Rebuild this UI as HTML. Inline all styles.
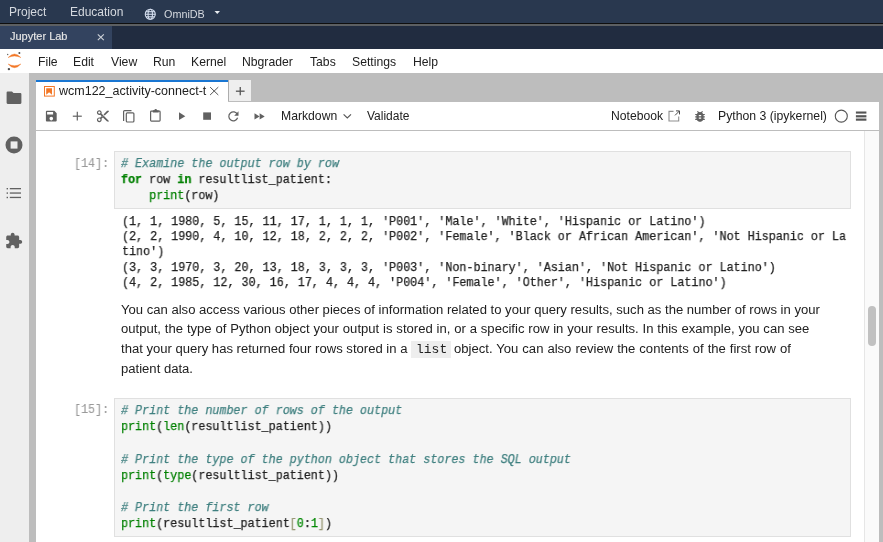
<!DOCTYPE html>
<html><head><meta charset="utf-8">
<style>
*{margin:0;padding:0;box-sizing:border-box}
html,body{width:883px;height:542px;overflow:hidden;background:#bdbdbd;font-family:"Liberation Sans",sans-serif}
.a{position:absolute}
.t{position:absolute;white-space:pre;line-height:1;will-change:transform}
svg{position:absolute;overflow:visible}
.mono{font-family:"Liberation Mono",monospace}
.cd{position:absolute;font-family:"Liberation Mono",monospace;font-size:12.8px;white-space:pre;color:#212121;transform-origin:0 0;transform:scaleX(0.9154);will-change:transform;-webkit-text-stroke:0.25px currentColor}
.c{color:#408080;font-style:italic}
.k{color:#008000;font-weight:bold}
.b{color:#008000}
.n{color:#008800}
.br{color:#999977}
</style></head><body>
<!-- top bar -->
<div class="a" style="left:0;top:0;width:883px;height:23px;background:#29384f"></div>
<div class="a" style="left:0;top:23px;width:883px;height:1px;background:#0e0e0e"></div>
<div class="a" style="left:0;top:24px;width:883px;height:2px;background:#5c5f62"></div>
<div class="a" style="left:0;top:26px;width:883px;height:23px;background:#212c40"></div>
<div class="a" style="left:0;top:26px;width:112px;height:23px;background:#33435f"></div>
<div class="t" style="left:9px;top:6px;font-size:12px;color:#d5d9df">Project</div>
<div class="t" style="left:70px;top:6px;font-size:12px;color:#d5d9df">Education</div>
<div class="t" style="left:163.5px;top:8.5px;font-size:10.8px;color:#d5d9df">OmniDB</div>
<div class="t" style="left:10px;top:31px;font-size:11px;color:#e6e6e6;-webkit-text-stroke:0.15px #e6e6e6">Jupyter Lab</div>

<!-- menu bar -->
<div class="a" style="left:0;top:49px;width:883px;height:24px;background:#fff"></div>
<div class="t" style="left:38.0px;top:56px;font-size:12.2px;color:#212121">File</div>
<div class="t" style="left:73.1px;top:56px;font-size:12.2px;color:#212121">Edit</div>
<div class="t" style="left:110.5px;top:56px;font-size:12.2px;color:#212121">View</div>
<div class="t" style="left:152.8px;top:56px;font-size:12.2px;color:#212121">Run</div>
<div class="t" style="left:190.7px;top:56px;font-size:12.2px;color:#212121">Kernel</div>
<div class="t" style="left:241.9px;top:56px;font-size:12.2px;color:#212121">Nbgrader</div>
<div class="t" style="left:309.6px;top:56px;font-size:12.2px;color:#212121">Tabs</div>
<div class="t" style="left:351.5px;top:56px;font-size:12.2px;color:#212121">Settings</div>
<div class="t" style="left:413.0px;top:56px;font-size:12.2px;color:#212121">Help</div>

<!-- left sidebar -->
<div class="a" style="left:0;top:73px;width:29px;height:469px;background:#eeeeee"></div>

<!-- tabs -->
<div class="a" style="left:36px;top:80px;width:192px;height:22px;background:#fff;border-top:2px solid #1976d2"></div>
<div class="a" style="left:228px;top:80px;width:23px;height:21px;background:#eeeeee;border-left:1px solid #adadad"></div>
<div class="t" style="left:59px;top:85px;width:148px;overflow:hidden;font-size:12.5px;color:#212121">wcm122_activity-connect-t</div>

<!-- notebook panel -->
<div class="a" style="left:36px;top:102px;width:843px;height:440px;background:#fff"></div>
<div class="a" style="left:36px;top:130px;width:843px;height:1px;background:#bdbdbd"></div>
<div class="t" style="left:281px;top:110px;font-size:12.2px;color:#212121">Markdown</div>
<div class="t" style="left:367px;top:110px;font-size:12px;color:#212121">Validate</div>
<div class="t" style="left:611px;top:110px;font-size:12.15px;color:#212121">Notebook</div>
<div class="t" style="left:718px;top:110px;font-size:12.25px;color:#212121">Python 3 (ipykernel)</div>

<!-- scrollbar -->
<div class="a" style="left:864px;top:131px;width:15px;height:411px;background:#fafafa;border-left:1px solid #e6e6e6"></div>
<div class="a" style="left:868px;top:306px;width:8px;height:40px;background:#c1c1c1;border-radius:4px"></div>

<!-- cell 14 -->
<div class="cd" style="left:73.5px;top:158px;line-height:1;color:#9a9a9a;-webkit-text-stroke:0.1px currentColor">[14]:</div>
<div class="a" style="left:114px;top:151px;width:737px;height:58px;background:#f5f5f5;border:1px solid #e0e0e0"></div>
<div class="cd" style="left:121px;top:156.2px;line-height:16.17px"><span class="c"># Examine the output row by row</span>
<span class="k">for</span> row <span class="k">in</span> resultlist_patient:
    <span class="b">print</span>(row)</div>
<div class="cd" style="left:121.5px;top:213.8px;line-height:15.22px">(1, 1, 1980, 5, 15, 11, 17, 1, 1, 1, 'P001', 'Male', 'White', 'Hispanic or Latino')
(2, 2, 1990, 4, 10, 12, 18, 2, 2, 2, 'P002', 'Female', 'Black or African American', 'Not Hispanic or La
tino')
(3, 3, 1970, 3, 20, 13, 18, 3, 3, 3, 'P003', 'Non-binary', 'Asian', 'Not Hispanic or Latino')
(4, 2, 1985, 12, 30, 16, 17, 4, 4, 4, 'P004', 'Female', 'Other', 'Hispanic or Latino')</div>

<!-- markdown -->
<div class="t" style="left:120.5px;top:302.5px;font-size:13.08px;color:#212121">You can also access various other pieces of information related to your query results, such as the number of rows in your</div>
<div class="t" style="left:120.5px;top:322.4px;font-size:13.08px;color:#212121;word-spacing:0.22px">output, the type of Python object your output is stored in, or a specific row in your results. In this example, you can see</div>
<div class="t" style="left:120.5px;top:342.4px;font-size:13.08px;color:#212121">that your query has returned four rows stored in a</div>
<div class="a" style="left:411px;top:341px;width:40px;height:17px;background:#eeeeee"></div>
<div class="t" style="left:415.5px;top:343.3px;font-size:13px;font-family:'Liberation Mono',monospace;color:#212121">list</div>
<div class="t" style="left:454px;top:342.4px;font-size:13.08px;color:#212121;word-spacing:0.35px">object. You can also review the contents of the first row of</div>
<div class="t" style="left:120.5px;top:362px;font-size:13.08px;color:#212121">patient data.</div>

<!-- cell 15 -->
<div class="cd" style="left:73.5px;top:403.5px;line-height:1;color:#9a9a9a;-webkit-text-stroke:0.1px currentColor">[15]:</div>
<div class="a" style="left:114px;top:398px;width:737px;height:139px;background:#f5f5f5;border:1px solid #e0e0e0"></div>
<div class="cd" style="left:121px;top:402.9px;line-height:16.17px"><span class="c"># Print the number of rows of the output</span>
<span class="b">print</span>(<span class="b">len</span>(resultlist_patient))

<span class="c"># Print the type of the python object that stores the SQL output</span>
<span class="b">print</span>(<span class="b">type</span>(resultlist_patient))

<span class="c"># Print the first row</span>
<span class="b">print</span>(resultlist_patient<span class="br">[</span><span class="n">0</span>:<span class="n">1</span><span class="br">]</span>)</div>


<svg class="a" style="left:0;top:0;z-index:5" width="883" height="542" viewBox="0 0 883 542">
<!-- globe -->
<g fill="none" stroke="#d3ddee" stroke-width="1.1">
<circle cx="150.25" cy="14.25" r="5"/>
<ellipse cx="150.25" cy="14.25" rx="2.2" ry="5"/>
<line x1="145.25" y1="14.25" x2="155.25" y2="14.25"/>
<line x1="145.9" y1="11.7" x2="154.6" y2="11.7"/>
<line x1="145.9" y1="16.8" x2="154.6" y2="16.8"/>
</g>
<polygon points="214.5,11 220,11 217.25,14" fill="#e8ecf0"/>
<!-- JL close -->
<g stroke="#cfd3d9" stroke-width="1.1"><line x1="97.8" y1="34.4" x2="103.8" y2="40.2"/><line x1="103.8" y1="34.4" x2="97.8" y2="40.2"/></g>
<!-- jupyter logo -->
<path d="M8.1,57.6 Q14.5,50.4 20.9,57.6 Q14.5,54.4 8.1,57.6 Z" fill="#f37726" stroke="#f37726" stroke-width="0.4" stroke-linejoin="round"/>
<path d="M8.1,64 Q14.5,71.4 20.9,64 Q14.5,67.4 8.1,64 Z" fill="#f37726" stroke="#f37726" stroke-width="0.4" stroke-linejoin="round"/>
<circle cx="7.7" cy="54.5" r="0.7" fill="#616161"/>
<circle cx="19.4" cy="53.1" r="1" fill="#4e4e4e"/>
<circle cx="8.9" cy="69.1" r="1.2" fill="#4e4e4e"/>
<!-- sidebar icons -->
<path d="M6.6,92.6 a1.1,1.1 0 0 1 1.1,-1.1 h4.3 l1.5,1.6 h6.8 a1.1,1.1 0 0 1 1.1,1.1 v8.6 a1.1,1.1 0 0 1 -1.1,1.1 h-12.6 a1.1,1.1 0 0 1 -1.1,-1.1 z" fill="#616161"/>
<circle cx="14" cy="145" r="8.5" fill="#616161"/>
<rect x="10.6" y="141.4" width="6.9" height="7.2" fill="#eeeeee"/>
<g fill="#616161">
<rect x="6.6" y="188" width="1.4" height="1.4"/><rect x="9.8" y="188" width="11.2" height="1.3"/>
<rect x="6.6" y="192.4" width="1.4" height="1.4"/><rect x="9.8" y="192.4" width="11.2" height="1.3"/>
<rect x="6.6" y="196.8" width="1.4" height="1.4"/><rect x="9.8" y="196.8" width="11.2" height="1.3"/>
</g>
<path transform="translate(4.7,231.9) scale(0.76,0.74)" fill="#616161" d="M20.5 11H19V7c0-1.1-.9-2-2-2h-4V3.5C13 2.12 11.880 1 10.5 1S8 2.12 8 3.5V5H4c-1.1 0-1.99.9-1.99 2v3.8H3.5c1.49 0 2.7 1.21 2.7 2.7s-1.21 2.7-2.7 2.7H2V20c0 1.1.9 2 2 2h3.8v-1.5c0-1.49 1.21-2.7 2.7-2.7 1.490 0 2.7 1.21 2.7 2.7V22H17c1.1 0 2-.9 2-2v-4h1.5c1.38 0 2.5-1.12 2.5-2.5S21.88 11 20.5 11z"/>
<!-- tab icons -->
<rect x="44.5" y="86.5" width="9.8" height="9.6" fill="none" stroke="#f37726" stroke-width="1"/>
<path d="M46.2,88.2 h5.8 v6.6 l-2.9,-2.5 l-2.9,2.5 z" fill="#f37726"/>
<g stroke="#555" stroke-width="1"><line x1="210.1" y1="87.1" x2="218.3" y2="95"/><line x1="218.3" y1="87.1" x2="210.1" y2="95"/></g>
<g stroke="#555" stroke-width="1.3"><line x1="235.9" y1="91.2" x2="244.6" y2="91.2"/><line x1="240.25" y1="87.1" x2="240.25" y2="95.3"/></g>
<!-- toolbar icons -->
<path transform="translate(44.1,109) scale(0.6)" fill="#616161" d="M17 3H5c-1.11 0-2 .9-2 2v14c0 1.1.89 2 2 2h14c1.1 0 2-.9 2-2V7l-4-4zm-5 16c-1.66 0-3-1.340-3-3s1.34-3 3-3 3 1.34 3 3-1.34 3-3 3zm3-10H5V5h10v4z"/>
<g stroke="#616161" stroke-width="1.2"><line x1="72.8" y1="116.2" x2="81.8" y2="116.2"/><line x1="77.3" y1="111.8" x2="77.3" y2="120.6"/></g>
<path transform="translate(95.7,109) scale(0.6)" fill="#616161" d="M9.64 7.64c.23-.5.36-1.05.36-1.64 0-2.21-1.79-4-4-4S2 3.79 2 6s1.79 4 4 4c.59 0 1.140-.13 1.64-.36L10 12l-2.36 2.36C7.14 14.13 6.59 14 6 14c-2.21 0-4 1.79-4 4s1.79 4 4 4 4-1.79 4-4c0-.59-.13-1.14-.36-1.64L12 14l7 7h3v-1L9.64 7.64zM6 8c-1.1 0-2-.89-2-2s.9-2 2-2 2 .89 2 2-.9 2-2 2zm0 12c-1.1 0-2-.89-2-2s.9-2 2-2 2 .89 2 2-.9 2-2 2zm6-7.5c-.28 0-.5-.22-.5-.5s.22-.5.5-.5.5.22.5.5-.22.5-.5.5zM19 3l-6 6 2 2 7-7V3z"/>
<g fill="none" stroke="#616161" stroke-width="1.2">
<path d="M123.6,121 V111.6 a1,1 0 0 1 1,-1 H131.5"/>
<rect x="126.3" y="112.8" width="7.6" height="9.2" rx="1"/>
<rect x="150.6" y="111.2" width="9.5" height="9.9" rx="0.8"/>
</g>
<path d="M152.8,110.3 h1.6 a1.3,1.3 0 0 1 2.6,0 h1.7 v2.2 h-5.9 z" fill="#616161"/>
<polygon points="179,112.3 185.3,116.2 179,120.1" fill="#616161"/>
<rect x="203.2" y="112.4" width="7.8" height="7.4" fill="#616161"/>
<path d="M237.4,114.4 A4.5,4.5 0 1 0 237.6,117.8" fill="none" stroke="#616161" stroke-width="1.2"/>
<polygon points="238.5,111.3 238.5,115.8 234.2,115.8" fill="#616161"/>
<polygon points="254.5,113.2 259.6,116.4 254.5,119.6" fill="#616161"/>
<polygon points="259.6,113.2 264.7,116.4 259.6,119.6" fill="#616161"/>
<polyline points="343.6,114.3 347.3,118 351,114.3" fill="none" stroke="#555" stroke-width="1.15"/>
<path d="M673.5,111.4 H669 V121 H678.7 V116.5" fill="none" stroke="#8f8f8f" stroke-width="1.1"/>
<line x1="675" y1="115.4" x2="679.4" y2="111" stroke="#4a4a4a" stroke-width="1"/>
<polyline points="676,110.9 679.5,110.9 679.5,114.4" fill="none" stroke="#4a4a4a" stroke-width="1"/>
<path transform="translate(692.8,109.1) scale(0.6)" fill="#616161" d="M20 8h-2.81c-.45-.78-1.07-1.45-1.82-1.96L17 4.41 15.59 3l-2.17 2.17C12.96 5.06 12.49 5 12 5c-.49 0-.96.06-1.41.17L8.41 3 7 4.41l1.62 1.63C7.88 6.55 7.26 7.22 6.81 8H4v2h2.09c-.05.33-.09.66-.09 1v1H4v2h2v1c0 .34.04.67.09 1H4v2h2.81c1.04 1.79 2.97 3 5.19 3s4.15-1.21 5.19-3H20v-2h-2.09c.05-.33.09-.66.09-1v-1h2v-2h-2v-1c0-.34-.04-.67-.09-1H20V8zm-6 8h-4v-2h4v2zm0-4h-4v-2h4v2z"/>
<circle cx="841.3" cy="116.15" r="6" fill="none" stroke="#555" stroke-width="1.1"/>
<rect x="855.9" y="117" width="10.5" height="1.8" fill="#bbb"/>
<rect x="855.9" y="111.5" width="10.5" height="2.1" fill="#555"/>
<rect x="855.9" y="115.2" width="10.5" height="1.8" fill="#555"/>
<rect x="855.9" y="118.8" width="10.5" height="1.9" fill="#555"/>
</svg>

</body></html>
